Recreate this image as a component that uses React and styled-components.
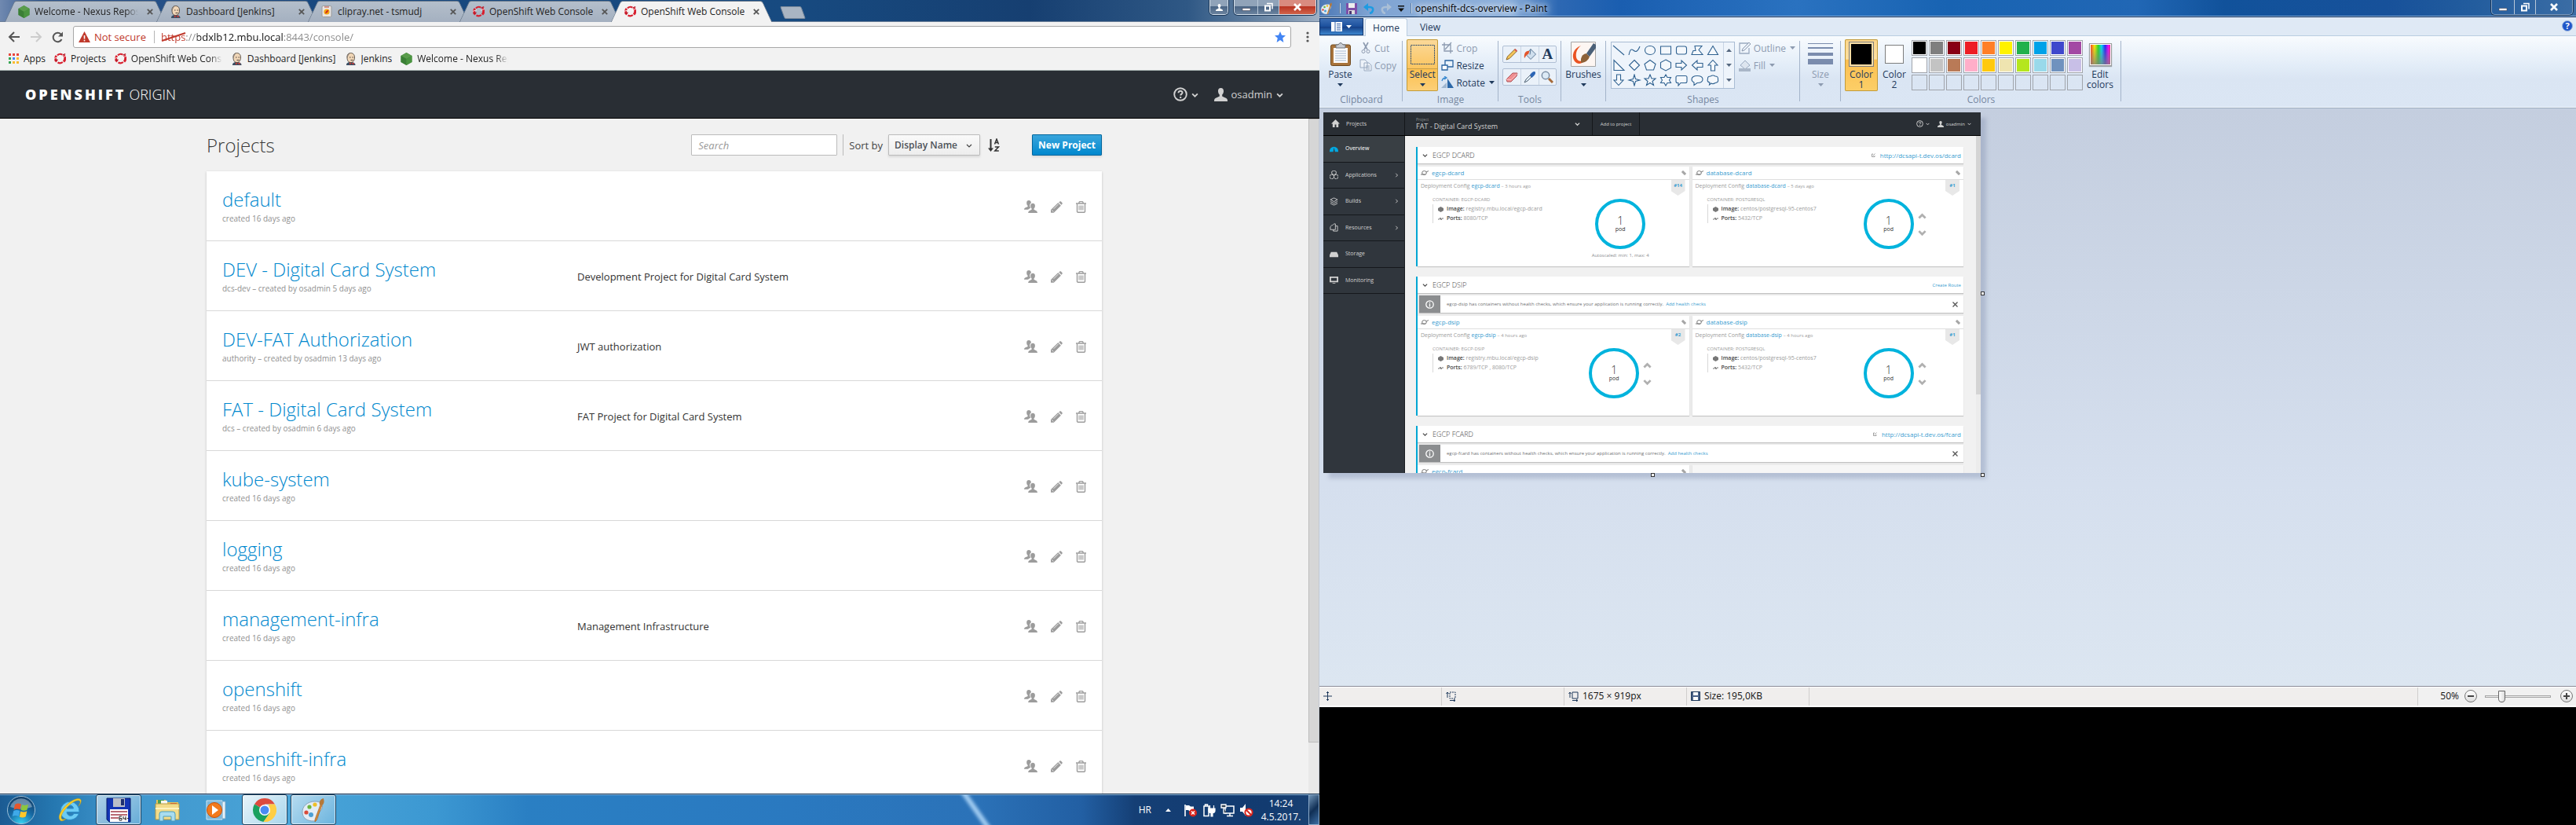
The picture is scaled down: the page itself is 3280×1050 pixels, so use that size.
import React from "react";
import styled, { createGlobalStyle, css } from "styled-components";

const ui = `"Open Sans", "Noto Sans", sans-serif`;

const GlobalStyle = createGlobalStyle`
  *, *::before, *::after { box-sizing: border-box; }
  body { margin: 0; background: #000; font-family: ${ui}; }
  button, input, select { font-family: inherit; margin: 0; padding: 0; border: 0; background: none; color: inherit; }
  button { cursor: pointer; }
  a { text-decoration: none; }
  svg { display: block; flex: none; }
  h1, h2, h3, p, ul { margin: 0; padding: 0; font-weight: inherit; list-style: none; }
`;

const Desktop = styled.div`
  display: grid;
  grid-template-columns: 21fr 20fr;
  height: 100vh;
  overflow: hidden;
`;
const LeftScreen = styled.div`
  display: flex;
  flex-direction: column;
  min-width: 0;
  min-height: 0;
  background: #f1f1f1;
`;
const RightScreen = styled.div`
  display: grid;
  grid-template-rows: 6fr 1fr;
  min-width: 0;
  min-height: 0;
  background: #000;
`;

/* ---------- small drawings ---------- */

const NexusIcon = () => (
  <svg width="15" height="16" viewBox="0 0 15 16">
    <path d="M7.500 0 14.500 4v8l-7 4-7-4V4z" fill="#3f8a3a" />
    <path d="M7.500 0 14.500 4l-7 4-7-4z" fill="#5a9c4c" />
    <path d="M7.500 8v8l-7-4V4z" fill="#3b7f36" />
    <path d="M7.500 8v8l7-4V4z" fill="#4a9440" />
  </svg>
);
const JenkinsIcon = () => (
  <svg width="15" height="16" viewBox="0 0 15 16">
    <path d="M2 16c0-3 2-4 5.500-4s6 1 6 4z" fill="#3b4f63" />
    <path d="M3 6c0-4 2-5.500 4.500-5.500S12.500 2 12.500 6c0 4-2 6.500-5 6.500S3 10 3 6z" fill="#f0d6b7" stroke="#3a322c" strokeWidth=".8" />
    <path d="M3 7C1.800 3 4.500.2 7.500.4 5 1.500 4.500 4 3 7z" fill="#8a8078" />
    <path d="M6 6h1.500M9.500 6H11M7.500 9.500h3" stroke="#3a322c" strokeWidth=".9" />
    <path d="m6 12.500 2.500 1.300L6 15.500zM11.500 12.500 8.500 13.800l3 1.700z" fill="#d33833" />
  </svg>
);
const ShiftIcon = () => (
  <svg width="15" height="15" viewBox="0 0 15 15">
    <path d="M3.200 11.500A5.600 5.600 0 0 1 3 4M12.200 3.500a5.600 5.600 0 0 1-.2 8" fill="none" stroke="#d8202f" strokeWidth="3" />
    <path d="M4 3.400a5.600 5.600 0 0 1 6.300-1M4.500 12.500a5.600 5.600 0 0 0 6.300-.5" fill="none" stroke="#d8202f" strokeWidth="2.200" />
    <path d="m0 7.400 5-1.800M10 6.200l5-1.800" stroke="#fff" strokeWidth=".8" />
    <path d="m.6 10.400 4-1.500M10.600 3.200l3.600-1.500" stroke="#b51a28" strokeWidth="1.300" />
  </svg>
);
const ClipIcon = () => (
  <svg width="15" height="15" viewBox="0 0 15 15">
    <rect x="1" y=".5" width="12" height="14" rx="1.500" fill="#e9e6e2" stroke="#9a9a9a" />
    <path d="M4 2h6" stroke="#c2463c" />
    <circle cx="7" cy="8" r="3.600" fill="#f3a712" />
    <path d="M5 10c1-3 2-4 4.500-4.500C9 8 7.500 10 5 10z" fill="#cf2b1c" />
  </svg>
);
const AppsIcon = () => (
  <svg width="13" height="13" viewBox="0 0 13 13">
    {["#e8453c", "#e8453c", "#e8453c", "#36a652", "#4688f1", "#f9bb2d", "#36a652", "#f9bb2d", "#f9bb2d"].map((c, i) => (
      <rect key={i} x={(i % 3) * 5} y={Math.floor(i / 3) * 5} width="3" height="3" fill={c} />
    ))}
  </svg>
);
const Chevron = ({ size = 8, dir = "down", w = 1.6 }) => {
  const d = { down: "M1 3l3 3 3-3", up: "M1 5.500l3-3 3 3", right: "M3 1l3 3-3 3" }[dir];
  return (
    <svg width={size} height={size} viewBox="0 0 8 8">
      <path d={d} fill="none" stroke="currentColor" strokeWidth={w} />
    </svg>
  );
};
const HelpIcon = ({ size = 18 }) => (
  <svg width={size} height={size} viewBox="0 0 18 18" fill="none" stroke="currentColor">
    <circle cx="9" cy="9" r="7.800" strokeWidth="1.900" />
    <path d="M6.500 7.300C6.500 4 11.700 4.200 11.500 7c-.1 1.600-2.300 1.700-2.300 3.600M9.200 12v1.900" strokeWidth="2" />
  </svg>
);
const UserIcon = ({ size = 17 }) => (
  <svg width={size} height={size} viewBox="0 0 17 17" fill="currentColor">
    <path d="M8.500 0C11 0 12.300 1.800 12 4.500c-.2 2-.9 3.300-1.800 4v1.800c0 1 5.800 2 6.500 4.200.3.900.3 1.700.3 2.500H0c0-.8 0-1.600.3-2.500.7-2.200 6.500-3.200 6.500-4.200V8.500C5.900 7.800 5.200 6.500 5 4.500 4.700 1.800 6 0 8.500 0z" />
  </svg>
);
const UsersIcon = () => (
  <svg width="17" height="16" viewBox="0 0 17 16" fill="currentColor">
    <path d="M6 0c2 0 3 1.300 2.900 3.200C7.500 4 7 5.500 7.300 7.200c.1 1 .5 1.900 1 2.500-1.600.7-2.600 1.200-3.200 2.100H0c0-2 1-2.600 4.300-3.600.4-.2.500-.9.200-1.500C3.600 5.800 3.200 4.600 3.200 3.200 3.200 1.200 4.200 0 6 0z" />
    <path d="M11 3.700c2 0 3.100 1.300 2.900 3.500-.1 1.500-.6 2.500-1.400 3.200v1.400c.9.900 4.500 1.200 4.500 4.200H5.200c0-3 3.500-3.300 4.400-4.200v-1.400c-.8-.7-1.300-1.700-1.400-3.200-.2-2.200.9-3.500 2.800-3.500z" />
  </svg>
);
const PencilIcon = () => (
  <svg width="15" height="15" viewBox="0 0 15 15" fill="currentColor">
    <path d="m9.300 2.100 3.600 3.600-8.300 8.300-.8.800H0V11l.8-.8zM11.300.6c.5-.5 1.200-.5 1.700 0l1.400 1.400c.5.500.5 1.200 0 1.700l-1 1-3.100-3.100z" />
    <path d="m3.600 9.800 6-6M1.300 11.400l2 2" stroke="#fff" strokeWidth=".8" />
  </svg>
);
const TrashIcon = () => (
  <svg width="13" height="15" viewBox="0 0 13 15" fill="none" stroke="currentColor">
    <path d="M0 3h13M4 2.800V1.400L4.800.7h3.400l.8.700v1.400" strokeWidth="1.300" />
    <path d="M1.500 3.500v10l.8.700h8.400l.8-.700v-10" strokeWidth="1.400" />
    <path d="M4 5.500v6M5.700 5.500v6M7.400 5.500v6M9 5.500v6" strokeWidth=".9" />
  </svg>
);
const SortIcon = () => (
  <svg width="15" height="18" viewBox="0 0 15 18" fill="none" stroke="#333">
    <path d="M3.500 1v13" strokeWidth="2" />
    <path d="M0 12.500h7L3.500 17z" fill="#333" stroke="none" />
    <path d="M8.500 7.500 11 1l2.500 6.500M9.500 5.500h3M8.800 11h4.700l-4.700 5h5" strokeWidth="1.500" />
  </svg>
);
const Triangle = ({ up }) => (
  <svg width="7" height="4" viewBox="0 0 7 4" fill="currentColor">
    <path d={up ? "M0 4h7L3.500 0z" : "M0 0h7L3.500 4z"} />
  </svg>
);
const WinMin = () => (
  <svg width="12" height="12" viewBox="0 0 12 12"><path d="M1 7.500h10v3H1z" fill="#fff" stroke="#445" strokeWidth=".6" /></svg>
);
const WinMax = () => (
  <svg width="12" height="12" viewBox="0 0 12 12" fill="none">
    <path d="M4 1.500h7v7" stroke="#fff" strokeWidth="1.500" />
    <path d="M2 4.500h6v6H2z" stroke="#fff" strokeWidth="2" />
  </svg>
);
const WinClose = () => (
  <svg width="12" height="12" viewBox="0 0 12 12"><path d="m2 2 8 8M10 2l-8 8" stroke="#fff" strokeWidth="2.600" /></svg>
);

/* ---------- browser ---------- */

const TitleBar = styled.div`
  display: flex;
  height: 28px;
  padding-left: 12px;
  background: linear-gradient(90deg, #7089b0 0, #2f568d 3%, #17487f 24%, #174a80 60%, #163f71 78%, #2f5885 90%, #7690ac 97%, #9fb0c4 100%);
  border-bottom: 1px solid #6b7f98;
`;
const Tabs = styled.div`
  display: flex;
  padding-top: 1px;
  margin-bottom: -1px;
  position: relative;
  z-index: 0;
`;
const tabFill = css`
  content: "";
  position: absolute;
  z-index: -1;
  top: 0;
  bottom: 0;
  background: ${(p) => (p.$active ? "#f2f2f2" : "linear-gradient(#b4bfcb, #a4b0c0)")};
  border: 0 solid #6b7a8c;
  border-top-width: 1px;
`;
const Tab = styled.div`
  position: relative;
  z-index: ${(p) => (p.$active ? 2 : 0)};
  display: flex;
  align-items: center;
  gap: 6px;
  width: 193px;
  padding: 0 8px 0 11px;
  font-size: 12px;
  line-height: 27px;
  color: #222;
  &::before { ${tabFill} left: 0; right: 40%; transform: skewX(-25deg); border-left-width: 1px; border-radius: 3px 0 0 0; }
  &::after { ${tabFill} left: 40%; right: 0; transform: skewX(25deg); border-right-width: 1px; border-radius: 0 3px 0 0; }
`;
const Fade = styled.span`
  flex: ${(p) => (p.$grow ? 1 : "none")};
  max-width: ${(p) => p.$max || 132}px;
  overflow: hidden;
  white-space: nowrap;
  ${(p) => p.$fade && "mask-image: linear-gradient(90deg, #000 calc(100% - 16px), transparent);"}
`;
const TabClose = styled.button`
  margin-left: auto;
  width: 12px;
  height: 12px;
  color: #555;
  svg { margin: 2px; }
`;
const NewTab = styled.button`
  width: 27px;
  height: 16px;
  margin: 8px 0 0 19px;
  background: #a9b5c3;
  border: 1px solid #7b8a9c;
  border-radius: 2px;
  transform: skewX(20deg);
`;
const WindowButtons = styled.div`
  display: flex;
  gap: 7px;
  height: 19px;
  margin: 0 4px 0 auto;
  align-self: flex-start;
`;
const ButtonCluster = styled.div`
  display: flex;
  border: 1px solid #d4e0ec;
  border-top: 0;
  border-radius: 0 0 5px 5px;
  overflow: hidden;
  box-shadow: 0 0 0 1px #1b3656;
`;
const WinButton = styled.button`
  display: grid;
  place-items: center;
  width: ${(p) => p.$w}px;
  color: #fff;
  background: ${(p) => (p.$red ? "linear-gradient(#d98b7f 0 45%, #b93422 46%, #d0634a)" : p.$glass ? "transparent" : "linear-gradient(#90a3b9 0 45%, #4a6585 46%, #6a829e)")};
  & + & { border-left: 1px solid #b9c8d8; }
`;
const GlassCluster = styled(ButtonCluster)`
  border-color: #7f9fc4;
  button + button { border-color: #7f9fc4; }
`;
const Toolbar = styled.div`
  display: flex;
  align-items: center;
  gap: 12px;
  height: 35px;
  padding: 5px 10px 2px;
  background: #f2f2f2;
`;
const NavButton = styled.button`
  color: ${(p) => (p.$off ? "#ccc" : "#555")};
`;
const Omnibox = styled.div`
  flex: 1;
  display: flex;
  align-items: center;
  height: 28px;
  padding: 0 6px;
  background: #fff;
  border: 1px solid #a8a8a8;
  border-radius: 3px;
`;
const Security = styled.button`
  display: flex;
  align-items: center;
  gap: 5px;
  padding-right: 10px;
  border-right: 1px solid #b5b5b5;
  color: #c0392b;
  font-size: 13px;
  line-height: 16px;
`;
const UrlWrap = styled.label`
  position: relative;
  flex: 1;
  display: flex;
  margin-left: 8px;
  svg { position: absolute; left: 0; top: 6px; }
`;
const UrlInput = styled.input`
  width: 100%;
  height: 24px;
  font-size: 13px;
  color: #222;
  -webkit-text-fill-color: transparent;
  background: linear-gradient(90deg, #c0392b 0 32px, #888 32px 46px, #111 46px 155px, #888 155px);
  background-clip: text;
  -webkit-background-clip: text;
  outline: 0;
`;
const Bookmarks = styled.nav`
  display: flex;
  align-items: center;
  gap: 11px;
  height: 27px;
  padding: 0 11px 3px;
  background: #f2f2f2;
  border-bottom: 1px solid #a9b5b2;
  font-size: 12px;
  line-height: 17px;
`;
const Bookmark = styled.a`
  display: flex;
  align-items: center;
  gap: 6px;
  color: #222;
`;
const Masthead = styled.header`
  display: flex;
  align-items: center;
  justify-content: space-between;
  height: 61px;
  padding: 0 46px 0 32px;
  background: #292e34;
  border-bottom: 1px solid #000;
  color: #d1d1d1;
`;
const Brand = styled.a`
  display: flex;
  gap: 4px;
  font-size: 18px;
  line-height: 24px;
  font-weight: 300;
  color: #fff;
  b { font-weight: 800; letter-spacing: 3px; }
`;
const MastTools = styled.div`
  display: flex;
  gap: 20px;
`;
const MastButton = styled.button`
  display: flex;
  align-items: center;
  gap: 5px;
  font-size: 13px;
  line-height: 20px;
`;
const Viewport = styled.div`
  flex: 1;
  min-height: 0;
  display: flex;
`;
const Page = styled.main`
  flex: 1;
  min-width: 0;
  overflow: hidden;
  padding: 20px 16px 0;
`;
const Container = styled.div`
  max-width: 1140px;
  margin: 0 auto;
`;
const PageHead = styled.div`
  display: flex;
  align-items: center;
  height: 27px;
  margin-bottom: 20px;
  font-size: 13px;
  color: #444;
`;
const PageTitle = styled.h1`
  flex: 1;
  font-size: 24px;
  line-height: 26px;
  font-weight: 300;
  color: #3a3a3a;
`;
const Search = styled.input`
  width: 186px;
  height: 27px;
  padding: 0 8px;
  background: #fff;
  border: 1px solid #bbb;
  border-radius: 1px;
  font-size: 13px;
  font-style: italic;
  &::placeholder { color: #999; font-style: italic; opacity: 1; }
`;
const SortBox = styled.label`
  display: flex;
  align-items: center;
  gap: 7px;
  height: 27px;
  margin-left: 7px;
  padding-left: 7px;
  border-left: 1px solid #bbb;
`;
const SelectWrap = styled.span`
  position: relative;
  display: flex;
  align-items: center;
  svg { position: absolute; right: 10px; pointer-events: none; }
`;
const SortSelect = styled.select`
  appearance: none;
  width: 117px;
  height: 27px;
  padding: 0 7px;
  font-size: 12px;
  font-weight: 600;
  color: #4d5258;
  background: linear-gradient(#fafafa, #ededed);
  border: 1px solid #bbb;
  border-radius: 1px;
  box-shadow: 0 2px 3px rgba(3, 3, 3, 0.1);
`;
const SortDirection = styled.button`
  margin: 0 41px 0 10px;
`;
const Primary = styled.button`
  width: 89px;
  height: 27px;
  font-size: 12px;
  font-weight: 700;
  color: #fff;
  background: linear-gradient(#39a5dc, #0088ce);
  border: 1px solid #00659c;
  border-radius: 1px;
  box-shadow: 0 2px 3px rgba(3, 3, 3, 0.1);
`;
const ProjectList = styled.ul`
  background: #fff;
  box-shadow: 0 1px 3px rgba(0, 0, 0, 0.2);
`;
const ProjectRow = styled.li`
  display: grid;
  grid-template-columns: 452px 1fr auto;
  align-items: center;
  height: 89px;
  padding: 2px 20px 0;
  border-bottom: 1px solid #d8d8d8;
  font-size: 13px;
  color: #333;
`;
const ProjectName = styled.a`
  display: block;
  font-size: 24px;
  line-height: 26px;
  font-weight: 300;
  color: #0088ce;
`;
const ProjectMeta = styled.p`
  margin-top: 4px;
  font-size: 10px;
  line-height: 15px;
  color: #8f8f8f;
`;
const RowActions = styled.div`
  display: flex;
  align-items: center;
  gap: 17px;
  color: #9c9c9c;
`;
const ScrollTrack = styled.div`
  width: 14px;
  background: #e8e8e8;
  border-right: 1px solid #c3c9d3;
`;
const ScrollThumb = styled.div`
  height: 794px;
  max-height: 93%;
  background: #d6d6d6;
  border: 1px solid #bdbdbd;
  border-width: 1px 0 1px 1px;
`;

const projects = [
  ["default", "created 16 days ago", ""],
  ["DEV - Digital Card System", "dcs-dev – created by osadmin 5 days ago", "Development Project for Digital Card System"],
  ["DEV-FAT Authorization", "authority – created by osadmin 13 days ago", "JWT authorization"],
  ["FAT - Digital Card System", "dcs – created by osadmin 6 days ago", "FAT Project for Digital Card System"],
  ["kube-system", "created 16 days ago", ""],
  ["logging", "created 16 days ago", ""],
  ["management-infra", "created 16 days ago", "Management Infrastructure"],
  ["openshift", "created 16 days ago", ""],
  ["openshift-infra", "created 16 days ago", ""],
];
const tabs = [
  ["Welcome - Nexus Repository", NexusIcon, true],
  ["Dashboard [Jenkins]", JenkinsIcon],
  ["clipray.net - tsmudj", ClipIcon],
  ["OpenShift Web Console", ShiftIcon],
  ["OpenShift Web Console", ShiftIcon],
];
const bookmarks = [
  ["Apps", AppsIcon],
  ["Projects", ShiftIcon],
  ["OpenShift Web Console", ShiftIcon, true],
  ["Dashboard [Jenkins]", JenkinsIcon],
  ["Jenkins", JenkinsIcon],
  ["Welcome - Nexus Repository", NexusIcon, true],
];

const Browser = () => (
  <>
    <TitleBar>
      <Tabs>
        {tabs.map(([t, Icon, fade], i) => (
          <Tab key={i} $active={i === 4}>
            <Icon />
            <Fade $grow $fade={fade}>{t}</Fade>
            <TabClose aria-label="Close tab">
              <svg width="8" height="8" viewBox="0 0 8 8"><path d="m.8.8 6.400 6.400m0-6.400L.8 7.200" stroke="currentColor" strokeWidth="1.800" /></svg>
            </TabClose>
          </Tab>
        ))}
      </Tabs>
      <NewTab aria-label="New tab" />
      <WindowButtons>
        <ButtonCluster>
          <WinButton $w={22} aria-label="Profile"><UserIcon size={9} /></WinButton>
        </ButtonCluster>
        <ButtonCluster>
          <WinButton $w={29} aria-label="Minimize"><WinMin /></WinButton>
          <WinButton $w={27} aria-label="Restore"><WinMax /></WinButton>
          <WinButton $w={47} $red aria-label="Close"><WinClose /></WinButton>
        </ButtonCluster>
      </WindowButtons>
    </TitleBar>
    <Toolbar>
      <NavButton aria-label="Back"><svg width="16" height="14" viewBox="0 0 16 14" fill="none" stroke="currentColor" strokeWidth="2"><path d="M15 7H2M8 1 2 7l6 6" /></svg></NavButton>
      <NavButton $off aria-label="Forward"><svg width="16" height="14" viewBox="0 0 16 14" fill="none" stroke="currentColor" strokeWidth="2"><path d="M1 7h13M8 1l6 6-6 6" /></svg></NavButton>
      <NavButton aria-label="Reload"><svg width="15" height="15" viewBox="0 0 15 15"><path d="M12.500 10A5.700 5.700 0 1 1 11.500 3.500" fill="none" stroke="currentColor" strokeWidth="2" /><path d="M14 .5v6H8z" fill="currentColor" /></svg></NavButton>
      <Omnibox>
        <Security>
          <svg width="15" height="14" viewBox="0 0 15 14"><path d="M7.500 0 15 14H0z" fill="#c0392b" /><path d="M7.500 5v4.500M7.500 10.700v1.800" stroke="#fff" strokeWidth="1.600" /></svg>
          Not secure
        </Security>
        <UrlWrap>
          <UrlInput aria-label="Address" defaultValue="https://bdxlb12.mbu.local:8443/console/" />
          <svg width="32" height="12" viewBox="0 0 32 12"><path d="m1 11 30-10" stroke="#c0392b" strokeWidth="2" /></svg>
        </UrlWrap>
        <svg width="14" height="14" viewBox="0 0 14 14"><path d="m7 0 2 4.800 5 .4-3.800 3.300L11.400 14 7 11l-4.400 3 1.200-5.500L0 5.200l5-.4z" fill="#4285f4" /></svg>
      </Omnibox>
      <NavButton aria-label="Menu"><svg width="14" height="14" viewBox="0 0 14 14" fill="currentColor"><circle cx="9" cy="2" r="1.600" /><circle cx="9" cy="7" r="1.600" /><circle cx="9" cy="12" r="1.600" /></svg></NavButton>
    </Toolbar>
    <Bookmarks>
      {bookmarks.map(([t, Icon, fade], i) => (
        <Bookmark key={i} href="#"><Icon /><Fade $max={116} $fade={fade}>{t}</Fade></Bookmark>
      ))}
    </Bookmarks>
    <Masthead>
      <Brand href="#"><b>OPENSHIFT</b><span>ORIGIN</span></Brand>
      <MastTools>
        <MastButton aria-label="Help"><HelpIcon /><Chevron size={9} /></MastButton>
        <MastButton><UserIcon />osadmin<Chevron size={9} /></MastButton>
      </MastTools>
    </Masthead>
    <Viewport>
      <Page>
        <Container>
          <PageHead>
            <PageTitle>Projects</PageTitle>
            <Search placeholder="Search" aria-label="Search" />
            <SortBox>
              Sort by
              <SelectWrap>
                <SortSelect defaultValue="Display Name"><option>Display Name</option></SortSelect>
                <Chevron size={8} w={1.2} />
              </SelectWrap>
            </SortBox>
            <SortDirection aria-label="Sort direction"><SortIcon /></SortDirection>
            <Primary>New Project</Primary>
          </PageHead>
          <ProjectList>
            {projects.map(([name, meta, desc]) => (
              <ProjectRow key={name}>
                <div>
                  <ProjectName href="#">{name}</ProjectName>
                  <ProjectMeta>{meta}</ProjectMeta>
                </div>
                <p>{desc}</p>
                <RowActions>
                  <button aria-label="Members"><UsersIcon /></button>
                  <button aria-label="Edit"><PencilIcon /></button>
                  <button aria-label="Delete"><TrashIcon /></button>
                </RowActions>
              </ProjectRow>
            ))}
          </ProjectList>
        </Container>
      </Page>
      <ScrollTrack><ScrollThumb /></ScrollTrack>
    </Viewport>
  </>
);

/* ---------- taskbar ---------- */

const TaskBar = styled.footer`
  position: relative;
  display: flex;
  align-items: center;
  height: 40px;
  padding-left: 8px;
  overflow: hidden;
  border-top: 1px solid #14304f;
  box-shadow: inset 0 1px 0 #8fb8dc;
  background: linear-gradient(90deg, #1b5b93 0, #2577b0 4%, #3f95cc 9%, #4aa5d8 22%, #3c98d2 33%, #2a7fc3 40%, #2a79c0 60%, #2b72b8 74%, #225fa3 82%, #153f75 86%, #123b70 96%, #1a4273 100%);
  color: #fff;
`;
const TaskButton = styled.button`
  display: grid;
  place-items: center;
  width: 58px;
  height: 39px;
  margin-right: 4px;
  border-radius: 3px;
  ${(p) => p.$open && `border: 1px solid #1e425f; box-shadow: inset 0 0 0 1px rgba(255,255,255,.6); background: linear-gradient(135deg, rgba(255,255,255,.6), rgba(255,255,255,.2));`}
  ${(p) => p.$front && `background: linear-gradient(135deg, #e8f4fa, #a9d6ec);`}
`;
const StartButton = styled.button`
  width: 38px;
  height: 39px;
  margin-right: 14px;
`;
const Streak = styled.div`
  position: absolute;
  left: 74%;
  top: -10px;
  width: 6px;
  height: 70px;
  background: #a9d2f5;
  transform: rotate(-35deg);
  filter: blur(2px);
`;
const Tray = styled.div`
  display: flex;
  align-items: center;
  gap: 6px;
  margin-left: auto;
  height: 100%;
  font-size: 12px;
  line-height: 17px;
`;
const Lang = styled.span`
  margin-right: 4px;
`;
const TrayArrow = styled.button`
  margin: 0 9px 0 8px;
`;
const Clock = styled.div`
  width: 58px;
  text-align: center;
`;
const ShowDesktop = styled.button`
  width: 14px;
  height: 39px;
  background: linear-gradient(135deg, #6f93b6, #102f55 50%, #3c6ea4);
  border: 1px solid #8caac8;
`;

const Taskbar = () => (
  <TaskBar>
    <Streak />
    <StartButton aria-label="Start">
      <svg width="38" height="38" viewBox="0 0 38 38">
        <defs>
          <radialGradient id="orb" cx=".5" cy="1" r="1"><stop offset="0" stopColor="#37d6f5" /><stop offset=".5" stopColor="#176aa5" /><stop offset="1" stopColor="#123b63" /></radialGradient>
        </defs>
        <circle cx="19" cy="19" r="17.500" fill="url(#orb)" stroke="#9dbfd8" />
        <path d="M5 15a14.500 14.500 0 0 1 28 0q-14 5-28 0z" fill="#fff" opacity=".35" />
        <path d="M11 12q4-2.500 8-.5l-1.500 7q-4-2-8 .2z" fill="#e8562a" />
        <path d="M20 12q4 2 8-.2l-1.500 7q-4 2-8 0z" fill="#8cc63e" />
        <path d="M9.300 20q4-2 8 0l-1.500 7q-4-2-8 0z" fill="#3fa9e8" />
        <path d="M18.300 20.500q4 2 8-.3l-1.500 7q-4 2.300-8 .2z" fill="#ffc629" />
      </svg>
    </StartButton>
    <TaskButton aria-label="Internet Explorer">
      <svg width="32" height="32" viewBox="0 0 32 32">
        <path d="M4 17a12 12.500 0 1 1 24 1.500H12c.5 5.500 7 6.500 9 2h6.300C23.500 32 4 31 4 17zm8-3h8.500c-.5-5.500-8-5.500-8.500 0z" fill="#6ccbf4" stroke="#2b8fcc" />
        <path d="M3 28C-2 20 20-2 29 2c3 2 0 7-2 9 2-3 3-6 1-7C22 1 4 18 5 26c.6 3 4 2 6 1-3 3-7 4-8 1z" fill="#f7ce2b" stroke="#c79a10" strokeWidth=".5" />
      </svg>
    </TaskButton>
    <TaskButton $open aria-label="Total Commander">
      <svg width="32" height="32" viewBox="0 0 32 32">
        <path d="M1 1h30v30H4l-3-3z" fill="#1234b4" stroke="#071a66" />
        <path d="M9 1h15v11H9z" fill="#b9bec8" /><path d="M19 2h4v8h-4z" fill="#1d2f70" />
        <path d="M5 15h23v16H5z" fill="#fff" />
        <path d="M6 18h21M6 22h21M6 26h10" stroke="#a23b45" strokeWidth="1.300" />
        <path d="M20 24h-3v5h3v-2.500h-3M22 24v3h4M25 24v5M27 26.500h2" stroke="#222" fill="none" />
      </svg>
    </TaskButton>
    <TaskButton aria-label="Explorer">
      <svg width="32" height="32" viewBox="0 0 32 32">
        <path d="M2 3h12l2 3h14v4H2z" fill="#e6c45a" /><path d="M4 3h8v5H4z" fill="#4b9e52" /><path d="M8 4h8v5H8z" fill="#f7f7f0" /><path d="M20 7h8v4h-8z" fill="#d33" />
        <path d="M1 8h30v20H1z" fill="#f2dc8b" stroke="#b89a42" /><path d="M1 14h30" stroke="#fff3bf" strokeWidth="2" />
        <path d="M6 30v-9q0-3 3-3h14q3 0 3 3v9h-5v-6H11v6z" fill="#a9dcef" stroke="#4b9dbd" />
      </svg>
    </TaskButton>
    <TaskButton aria-label="Media Player">
      <svg width="32" height="28" viewBox="0 0 32 28">
        <path d="M4 2h20v24H4z" fill="#7db9dc" stroke="#cfe6f4" /><path d="M24 3h4v22h-4z" fill="#e8f2f8" stroke="#6ea4c6" />
        <circle cx="14" cy="14" r="9.500" fill="#f27a1d" stroke="#c9530b" /><path d="m11 8 8 6-8 6z" fill="#fff" />
      </svg>
    </TaskButton>
    <TaskButton $open $front aria-label="Chrome">
      <svg width="30" height="30" viewBox="0 0 30 30">
        <path d="M15 15 2 7.500A15 15 0 0 1 28 7.500H15z" fill="#dd4b3e" />
        <path d="M15 15 2 7.500A15 15 0 0 0 13.500 29.900L21.500 18.800z" fill="#1aa15f" />
        <path d="M28 7.500A15 15 0 0 1 13.500 29.900L21.500 18.800 20 7.500z" fill="#ffce44" />
        <circle cx="15" cy="15" r="7" fill="#fff" /><circle cx="15" cy="15" r="5.500" fill="#4a8af4" />
      </svg>
    </TaskButton>
    <TaskButton $open aria-label="Paint"><PaletteIcon size={32} /></TaskButton>
    <Tray>
      <Lang>HR</Lang>
      <TrayArrow aria-label="Show hidden icons"><Triangle up /></TrayArrow>
      <svg width="18" height="18" viewBox="0 0 18 18"><path d="M3 2v15" stroke="#fff" strokeWidth="1.600" /><path d="M4 3h4l2 1.500h4v6H9L7 9H4z" fill="#fff" /><circle cx="13" cy="12.500" r="5" fill="#d8251d" /><path d="m11 10.500 4 4m0-4-4 4" stroke="#fff" strokeWidth="1.500" /></svg>
      <svg width="18" height="18" viewBox="0 0 18 18"><path d="M3 4h6v12.500H3zM4.500 2h3v2h-3z" fill="none" stroke="#fff" strokeWidth="1.500" /><path d="M9 7h8v3q0 2.500-3 2.500V17h-2v-4.500q-3 0-3-2.500zM10.500 3v4M15.500 3v4" fill="#fff" stroke="#fff" strokeWidth="1.200" /></svg>
      <svg width="18" height="18" viewBox="0 0 18 18"><path d="M6 4h11v9H6zM8 16.500h8M12 13v3" fill="none" stroke="#fff" strokeWidth="1.500" /><path d="M1 2h6v4H1zM4 6v7h4" fill="#345" stroke="#fff" strokeWidth="1.300" /></svg>
      <svg width="18" height="18" viewBox="0 0 18 18"><path d="M1 6h3l4-5v15l-4-5H1z" fill="#fff" /><circle cx="12" cy="12" r="4.600" fill="#fff" stroke="#d8251d" strokeWidth="2" /><path d="m9 9 6 6" stroke="#d8251d" strokeWidth="2" /></svg>
      <Clock><div>14:24</div><div>4.5.2017.</div></Clock>
      <ShowDesktop aria-label="Show desktop" />
    </Tray>
  </TaskBar>
);

/* ---------- paint ---------- */

const PaletteIcon = ({ size = 16 }) => (
  <svg width={size} height={size} viewBox="0 0 32 32">
    <path d="M2 20C1 11 9 5 18 5c8 0 11 4 9 9s-5 4-5 8 0 8-6 8C9 30 3 27 2 20z" fill="#e3edf5" stroke="#8aa3ba" />
    <circle cx="7" cy="19" r="2.600" fill="#d94b3a" /><circle cx="11" cy="12" r="2.600" fill="#6ab43e" /><circle cx="18" cy="9" r="2.600" fill="#f0bf27" /><circle cx="13" cy="22" r="3" fill="#4c9fd4" />
    <path d="m18 31 2-2 7-19-2-1-7 19z" fill="#d68b3a" stroke="#9c5b1c" strokeWidth=".6" />
    <path d="M24 9c-1-4 1-7 5-8 1 4 1 7-2 9z" fill="#b5793a" />
  </svg>
);

const PaintWindow = styled.div`
  display: flex;
  flex-direction: column;
  min-width: 0;
  min-height: 0;
  font-size: 12px;
  line-height: 16px;
  color: #1e395b;
`;
const PaintTitle = styled.div`
  display: flex;
  align-items: center;
  height: 22px;
  padding-left: 1px;
  border-bottom: 1px solid #0d2c5a;
  box-shadow: inset 0 -1px 0 #8db4dd;
  background: linear-gradient(90deg, #4c78b5 0, #7fa3d2 4%, #8fb2dc 15%, #2d68b3 19%, #1a5eb0 24%, #2a72c0 38%, #1863b2 50%, #2167b5 65%, #11529b 72%, #17519a 85%, #235d9e 92%, #3b6da5 100%);
`;
const QuickTools = styled.div`
  display: flex;
  align-items: center;
  gap: 8px;
  margin-right: 5px;
  color: #111;
`;
const QuickSep = styled.i`
  width: 1px;
  height: 13px;
  background: #5c7ca4;
  box-shadow: 1px 0 0 #c3d5ea;
`;
const TitleText = styled.span`
  color: #000;
  text-shadow: 0 0 8px #fff, 0 0 8px #fff;
`;
const RibbonTabs = styled.div`
  display: flex;
  align-items: flex-end;
  height: 24px;
  padding: 1px 4px 0 0;
  background: #dfe9f5;
  border-bottom: 1px solid #bacde0;
`;
const FileButton = styled.button`
  display: flex;
  align-items: center;
  justify-content: center;
  gap: 5px;
  width: 56px;
  height: 22px;
  margin-right: 2px;
  color: #fff;
  background: linear-gradient(#3c6eb4, #1b4f9c 50%, #153f86 51%, #3c86cf);
  border: 1px solid #14386f;
`;
const RibbonTab = styled.button`
  width: ${(p) => (p.$active ? 54 : 58)}px;
  height: 23px;
  margin-bottom: -1px;
  font-size: 12px;
  color: #1e395b;
  ${(p) => p.$active && "background: #f8fbfe; border: 1px solid #bacde0; border-bottom: 0; border-radius: 3px 3px 0 0;"}
`;
const HelpButton = styled.button`
  display: grid;
  place-items: center;
  width: 14px;
  height: 14px;
  margin: 0 0 5px auto;
  border-radius: 50%;
  font-size: 11px;
  line-height: 12px;
  font-weight: 700;
  color: #fff;
  background: #1f55c8;
  border: 1px solid #9bb6e0;
`;
const Ribbon = styled.div`
  display: flex;
  height: 92px;
  padding: 4px 1px 0;
  background: linear-gradient(#f8fbfe, #e3edf8 40%, #dae5f3 60%, #dbe6f4);
  border-bottom: 1px solid #a0aec0;
  box-shadow: inset 0 -1px 0 #f0f6fc;
`;
const Group = styled.section`
  display: flex;
  flex-direction: column;
  width: ${(p) => p.$w}px;
  background: linear-gradient(#a4b4ca, #a4b4ca) 100% 2px / 1px 77px no-repeat;
`;
const GroupBody = styled.div`
  display: flex;
  gap: ${(p) => p.$gap || 0}px;
  height: 68px;
  padding: 0 ${(p) => p.$pad || 5}px;
`;
const GroupLabel = styled.h2`
  font-size: 12px;
  line-height: 20px;
  text-align: center;
  color: #76879f;
`;
const BigButton = styled.button`
  display: flex;
  flex-direction: column;
  align-items: center;
  width: ${(p) => p.$w || 42}px;
  height: 66px;
  font-size: 12px;
  line-height: 13px;
  color: ${(p) => (p.$off ? "#8d9bb0" : "#1e395b")};
  border-radius: 2px;
  ${(p) => p.$on && "background: linear-gradient(#fbd58b, #fde0a0 38%, #fbbf50 40%, #fccf68); box-shadow: inset 0 0 0 1px #c29b3a;"}
  ${(p) => p.$split && "background: linear-gradient(#fbd99a, #fbc560 37px, #c9a04a 37px, #c9a04a 38px, #fcc050 38px, #fcd079);"}
`;
const BigIcon = styled.span`
  display: grid;
  place-items: center;
  height: 38px;
`;
const Caret = styled.span`
  display: grid;
  place-items: center;
  height: 13px;
`;
const SmallColumn = styled.div`
  display: flex;
  flex-direction: column;
`;
const SmallButton = styled.button`
  display: flex;
  align-items: center;
  gap: 3px;
  height: 22px;
  font-size: 12px;
  color: ${(p) => (p.$off ? "#8d9bb0" : "#1e395b")};
`;
const CaretGap = styled.span`
  margin-left: 2px;
`;
const ToolGrid = styled.div`
  display: flex;
  flex-direction: column;
  gap: 7px;
  padding-top: 8px;
`;
const ToolRow = styled.div`
  display: grid;
  grid-template-columns: repeat(3, 1fr);
  width: 69px;
  height: 22px;
  border: 1px solid #b0bfd4;
  border-radius: 2px;
  background: #eaf1f9;
`;
const Tool = styled.button`
  display: grid;
  place-items: center;
  & + & { border-left: 1px solid #c8d4e4; }
`;
const ShapeBox = styled.div`
  display: flex;
  width: 158px;
  height: 60px;
  margin-top: 3px;
  border: 1px solid #a9bcd3;
  background: #eef4fb;
`;
const ShapeGrid = styled.div`
  flex: 1;
  display: grid;
  grid-template-columns: repeat(7, 20px);
  align-content: space-around;
`;
const ShapeScroll = styled.div`
  display: flex;
  flex-direction: column;
  justify-content: space-around;
  align-items: center;
  width: 14px;
  border-left: 1px solid #c8d4e4;
  color: #55677f;
`;
const Swatch = styled.span`
  display: block;
  width: ${(p) => p.$s}px;
  height: ${(p) => p.$s}px;
  border: 1px solid #7d7d7d;
  box-shadow: inset 0 0 0 2px ${(p) => p.$rim};
  background: ${(p) => p.$c};
`;
const PaletteGrid = styled.div`
  display: grid;
  grid-template-columns: repeat(10, 20px);
  grid-auto-rows: 20px;
  gap: 2px;
  padding: 1px 1px 0;
`;
const PaletteCell = styled.button`
  border: 1px solid #a0a4ab;
  background: ${(p) => p.$c || "transparent"};
  ${(p) => p.$c && "box-shadow: inset 0 0 0 1px #fff;"}
`;
const Rainbow = styled.span`
  width: 29px;
  height: 29px;
  border: 1px solid #9a9a9a;
  box-shadow: inset 0 0 0 1px #fff, 0 1px 1px rgba(0, 0, 0, 0.3);
  background: linear-gradient(transparent, rgba(128, 128, 128, 0.8)), linear-gradient(90deg, #f22, #fe0 22%, #2d2 40%, #0df 55%, #22f 72%, #f0f 88%, #f25);
`;
const Workspace = styled.div`
  flex: 1;
  min-height: 0;
  padding: 5px;
  background: linear-gradient(#c4cedf, #d5dfee 65%, #dce6f1);
`;
const CanvasFrame = styled.div`
  position: relative;
  width: 837px;
  height: 459px;
  box-shadow: 7px 7px 5px rgba(120, 135, 165, 0.35);
`;
const Handle = styled.i`
  position: absolute;
  width: 5px;
  height: 5px;
  background: #fff;
  border: 1px solid #333;
  ${(p) => p.$at}
`;
const StatusBar = styled.div`
  display: flex;
  align-items: center;
  height: 27px;
  border-top: 1px solid #8b8b97;
  border-bottom: 2px solid #fff;
  box-shadow: inset 0 1px 0 #fff;
  background: #f0eeed;
  color: #111;
`;
const StatusCell = styled.div`
  display: flex;
  align-items: center;
  gap: 5px;
  width: 156px;
  height: 23px;
  padding-left: 5px;
  border-right: 1px solid #d0cecd;
`;
const ZoomCell = styled.label`
  display: flex;
  align-items: center;
  gap: 7px;
  height: 23px;
  margin-left: auto;
  padding: 0 4px 0 28px;
  border-left: 1px solid #d0cecd;
  background: #f1f1f1;
`;
const RoundButton = styled.button`
  display: grid;
  place-items: center;
  width: 16px;
  height: 16px;
  border: 1px solid #777;
  border-radius: 50%;
  background: linear-gradient(#fff, #ddd);
`;
const ZoomRange = styled.input`
  appearance: none;
  width: 84px;
  height: 16px;
  margin: 0 5px 0 3px;
  &::-webkit-slider-runnable-track { height: 3px; background: #eee; border: 1px solid #a5a5a5; }
  &::-webkit-slider-thumb {
    appearance: none;
    width: 9px;
    height: 15px;
    margin-top: -7px;
    background: linear-gradient(90deg, #fff, #ddd);
    border: 1px solid #666;
    border-radius: 1px 1px 5px 5px;
  }
`;

const shapePaths = [
  "M1 2l14 12", "M1 14C5-4 8 20 15 3", "M8 2.500c4 0 6.500 2.500 6.500 5.500S12 13.500 8 13.500 1.500 11 1.500 8 4 2.500 8 2.500z",
  "M1.500 3h13v10h-13z", "M4 3h8q2.500 0 2.500 2.500v5q0 2.500-2.500 2.500H4q-2.500 0-2.500-2.500v-5Q1.500 3 4 3z", "M5 2.500h9l-4 5 5 6H1l2-5h3z", "M8 2.500 14.500 13.500h-13z",
  "M2 1.500v13h13z", "M8 1.500 14.500 8 8 14.500 1.500 8z", "M8 1.500l7 5-2.500 7.500h-9L1 6.500z", "M8 1l6.500 3.500v7L8 15l-6.500-3.500v-7z",
  "M1 5.500h7V2l6.500 6L8 14v-3.500H1z", "M15 5.500H8V2L1.500 8 8 14v-3.500h7z", "M5.500 15V8H2l6-6.500L14 8h-3.500v7z",
  "M5.500 1v7H2l6 6.500L14 8h-3.500V1z", "M8 1l1.500 5.500L15 8 9.500 9.500 8 15 6.500 9.500 1 8l5.500-1.500z", "M8 1l2 5h5l-4 3.500 1.500 5L8 11.500 3.500 14.500l1.500-5L1 6h5z",
  "M8 1l2 3.500h4.500L12.500 8l2 3.500H10L8 15l-2-3.500H1.500l2-3.500-2-3.500H6z", "M3 2.500h10q2 0 2 2v5q0 2-2 2H7L4 15v-3.500H3q-2 0-2-2v-5q0-2 2-2z",
  "M8 2.500c4.500 0 7 2 7 4.500s-2.500 4.500-7 4.500L4 14.500v-3.600C2 10 1 8.700 1 7c0-2.500 2.500-4.500 7-4.500z",
  "M5 3q3-2 6 0 4 0 3.500 4 1 4-3.500 4.500-3 2-5 .500L3.500 14l.5-3Q0 10 1.500 6.500 1 3 5 3z",
];
const palette = [
  "#000", "#7f7f7f", "#880015", "#ed1c24", "#ff7f27", "#fff200", "#22b14c", "#00a2e8", "#3f48cc", "#a349a4",
  "#fff", "#c3c3c3", "#b97a57", "#ffaec9", "#ffc90e", "#efe4b0", "#b5e61d", "#99d9ea", "#7092be", "#c8bfe7",
  ...Array(10).fill(""),
];
const Svg16 = ({ children }) => <svg width="16" height="16" viewBox="0 0 16 16" fill="none">{children}</svg>;
const PencilTool = () => <Svg16><path d="m1 15 1.500-4L12 1.500 14.500 4 5 13.500z" fill="#f5c65a" stroke="#8b6320" /><path d="m11 2.500 2.500 2.500L15 3.500 12.500 1z" fill="#d65a5a" /></Svg16>;
const BucketTool = () => <Svg16><path d="m9 1.500 6.500 6.500-6.500 6.500L3 8.500z" fill="#cfdfee" stroke="#5c7896" /><path d="m9 1.500-1 7" stroke="#5c7896" /><path d="M7.500 4C3 3 0 7 1 13c1.500-1 1.500-4 5-5z" fill="#e3552b" /></Svg16>;
const EraserTool = () => <Svg16><path d="m1 11 8-8h6l-1 4-7 7H2z" fill="#ef8e90" stroke="#b0565b" /><path d="m1 11 6 .500 8-8" stroke="#f9c6c8" /></Svg16>;
const PickerTool = () => <Svg16><path d="m1 15 2-4 5-5 2 2-5 5z" fill="#e0edf8" stroke="#567" /><path d="m8 5 3-3q3-2 4 0 .500 2-1.500 4l-3 3z" fill="#2c65b5" /></Svg16>;
const LensTool = () => <Svg16><circle cx="6" cy="6" r="4.700" fill="#dceaf6" stroke="#7b8ea5" strokeWidth="1.500" /><path d="m10 10 5 5" stroke="#a56a3a" strokeWidth="3" /></Svg16>;
const TextTool = styled.b`
  font: bold 19px/20px "Liberation Serif", serif;
  color: #1e395b;
`;

const Paint = () => (
  <PaintWindow>
    <PaintTitle>
      <QuickTools>
        <PaletteIcon size={16} />
        <QuickSep />
        <svg width="14" height="14" viewBox="0 0 14 14"><path d="M0 0h14v14H0z" fill="#7d4fa8" /><path d="M3 0h8v6H3z" fill="#eee" /><path d="M3 9h8v5H3z" fill="#ddd" /><path d="M4 10h3v4H4z" fill="#4b3470" /></svg>
        <svg width="14" height="14" viewBox="0 0 14 14"><path d="M4 5h4q5 0 4 4.500-1 3-4 3.500" fill="none" stroke="#1d9be2" strokeWidth="2.600" /><path d="M0 5 6 0v10z" fill="#1d9be2" /></svg>
        <svg width="14" height="14" viewBox="0 0 14 14"><path d="M10 5H6q-5 0-4 4.500 1 3 4 3.500" fill="none" stroke="#aabfd6" strokeWidth="2.600" /><path d="m14 5-6-5v10z" fill="#aabfd6" /></svg>
        <svg width="8" height="8" viewBox="0 0 8 8"><path d="M0 0h8v1.500H0zM0 3.500h8L4 8z" fill="#111" /></svg>
        <QuickSep />
      </QuickTools>
      <TitleText>openshift-dcs-overview - Paint</TitleText>
      <WindowButtons>
        <GlassCluster>
          <WinButton $w={28} $glass aria-label="Minimize"><WinMin /></WinButton>
          <WinButton $w={27} $glass aria-label="Restore"><WinMax /></WinButton>
          <WinButton $w={47} $glass aria-label="Close"><WinClose /></WinButton>
        </GlassCluster>
      </WindowButtons>
    </PaintTitle>
    <RibbonTabs>
      <FileButton aria-label="File">
        <svg width="14" height="12" viewBox="0 0 14 12"><path d="M0 0h14v12H0z" fill="#fff" /><path d="M5 0v12M7 2.500h5M7 5h5M7 7.500h5M7 10h5" stroke="#2b5ca8" /></svg>
        <Triangle />
      </FileButton>
      <RibbonTab $active>Home</RibbonTab>
      <RibbonTab>View</RibbonTab>
      <HelpButton>?</HelpButton>
    </RibbonTabs>
    <Ribbon>
      <Group $w={105}>
        <GroupBody $gap={4}>
          <BigButton $w={41}>
            <BigIcon><svg width="26" height="30" viewBox="0 0 26 30"><rect x=".5" y="3" width="25" height="26.500" rx="2" fill="#a8743c" stroke="#6f4a1f" /><path d="M4 7h18v19H4z" fill="#fff" /><path d="M6 11h14M6 14h14M6 17h14M6 20h14M6 23h14" stroke="#9fb4cc" /><path d="M7 3h3q3-5 6 0h3v4H7z" fill="#c8ccd2" stroke="#6b7078" /></svg></BigIcon>
            Paste<Caret><Triangle /></Caret>
          </BigButton>
          <SmallColumn>
            <SmallButton $off><Svg16><path d="M5 1l5 9M11 1l-5 9" stroke="#8d9bb0" strokeWidth="1.600" /><circle cx="5" cy="12.500" r="2" stroke="#8d9bb0" /><circle cx="11" cy="12.500" r="2" stroke="#8d9bb0" /></Svg16>Cut</SmallButton>
            <SmallButton $off><Svg16><path d="M1 1h6l3 3v7H1zM6 5h6l3 3v7H6z" fill="#eef3f9" stroke="#9aaac0" /><path d="M8 9h5M8 11h5M8 13h5" stroke="#9aaac0" /></Svg16>Copy</SmallButton>
          </SmallColumn>
        </GroupBody>
        <GroupLabel>Clipboard</GroupLabel>
      </Group>
      <Group $w={122}>
        <GroupBody $gap={4}>
          <BigButton $on $split>
            <BigIcon><svg width="31" height="25" viewBox="0 0 31 25"><path d="M.5.5h30v24H.5z" fill="none" stroke="#24466e" strokeDasharray="2 1" /></svg></BigIcon>
            Select<Caret><Triangle /></Caret>
          </BigButton>
          <SmallColumn>
            <SmallButton $off><Svg16><path d="M4 1v11h11M1 4h11v11M13 1 5 10" stroke="#8d9bb0" strokeWidth="1.300" /></Svg16>Crop</SmallButton>
            <SmallButton><Svg16><path d="M5 2h10v8H5z" fill="#eaf3fb" stroke="#2a64a0" strokeWidth="1.300" /><path d="M1 8h7v6H1z" fill="#fff" stroke="#2a64a0" strokeWidth="1.300" /></Svg16>Resize</SmallButton>
            <SmallButton><Svg16><path d="M0 15h7V8z" fill="#9fb6d0" /><path d="M8 15h8L8 3z" fill="#2c68a8" /><path d="M1 6q1-4 5-4M4 0l3 2-3 2" stroke="#3a8ad0" strokeWidth="1.300" /></Svg16>Rotate<CaretGap><Triangle /></CaretGap></SmallButton>
          </SmallColumn>
        </GroupBody>
        <GroupLabel>Image</GroupLabel>
      </Group>
      <Group $w={80}>
        <GroupBody>
          <ToolGrid>
            <ToolRow>
              <Tool aria-label="Pencil"><PencilTool /></Tool><Tool aria-label="Fill"><BucketTool /></Tool><Tool><TextTool>A</TextTool></Tool>
            </ToolRow>
            <ToolRow>
              <Tool aria-label="Eraser"><EraserTool /></Tool><Tool aria-label="Color picker"><PickerTool /></Tool><Tool aria-label="Magnifier"><LensTool /></Tool>
            </ToolRow>
          </ToolGrid>
        </GroupBody>
        <GroupLabel>Tools</GroupLabel>
      </Group>
      <Group $w={57}>
        <GroupBody>
          <BigButton $w={46}>
            <BigIcon><svg width="32" height="32" viewBox="0 0 32 32"><path d="M.5.5h31v31H.5z" fill="#fdf6f2" stroke="#a5a5a5" /><path d="M13 5C4 8 0 18 5 25c4 5 11 3 14-2-6 3-11 2-12-3C6 14 8 9 13 5z" fill="#ea5322" /><path d="M13 22q1-6 7-7l4 4q-2 7-11 8z" fill="#8d6238" /><path d="m20 15 9-13 3 2v4l-8 11z" fill="#4a6078" /></svg></BigIcon>
            Brushes<Caret><Triangle /></Caret>
          </BigButton>
        </GroupBody>
      </Group>
      <Group $w={247}>
        <GroupBody $gap={5} $pad={6}>
          <ShapeBox>
            <ShapeGrid>
              {shapePaths.map((d, i) => (
                <button key={i} aria-label={`Shape ${i + 1}`}>
                  <svg width="18" height="16" viewBox="0 0 16 16"><path d={d} fill={i < 2 ? "none" : "#f4f8fc"} stroke="#2f6190" strokeWidth="1.100" /></svg>
                </button>
              ))}
            </ShapeGrid>
            <ShapeScroll><Triangle up /><Triangle /><Triangle /></ShapeScroll>
          </ShapeBox>
          <SmallColumn>
            <SmallButton $off><Svg16><path d="M12 2H1v13h12V8" stroke="#9aaac0" strokeWidth="1.300" /><path d="m4 12 1-3 8-8 2 2-8 8z" fill="#e8eef6" stroke="#8d9bb0" /></Svg16>Outline<CaretGap><Triangle /></CaretGap></SmallButton>
            <SmallButton $off><Svg16><path d="m8 2 6 6-6 5-6-5z" fill="#dde5ef" stroke="#9aaac0" /><path d="M0 12h15v4H0z" fill="#a9b6c8" /></Svg16>Fill<CaretGap><Triangle /></CaretGap></SmallButton>
          </SmallColumn>
        </GroupBody>
        <GroupLabel>Shapes</GroupLabel>
      </Group>
      <Group $w={52}>
        <GroupBody>
          <BigButton $off>
            <BigIcon><svg width="32" height="29" viewBox="0 0 32 29" fill="#7a8cad"><path d="M0 0h32v1H0zM0 5h32v2H0zM0 12h32v4H0zM0 20h32v7H0z" /></svg></BigIcon>
            Size<Caret><Triangle /></Caret>
          </BigButton>
        </GroupBody>
      </Group>
      <Group $w={357}>
        <GroupBody>
          <BigButton $on><BigIcon><Swatch $s={32} $c="#000" $rim="#f7dda4" /></BigIcon><span>Color</span><span>1</span></BigButton>
          <BigButton><BigIcon><Swatch $s={24} $c="#fff" $rim="#fff" /></BigIcon><span>Color</span><span>2</span></BigButton>
          <PaletteGrid>
            {palette.map((c, i) => <PaletteCell key={i} $c={c} aria-label={`Palette ${i + 1}`} />)}
          </PaletteGrid>
          <BigButton><BigIcon><Rainbow /></BigIcon><span>Edit</span><span>colors</span></BigButton>
        </GroupBody>
        <GroupLabel>Colors</GroupLabel>
      </Group>
    </Ribbon>
    <Workspace>
      <CanvasFrame>
        <Overview />
        <Handle $at="left: 100%; top: calc(50% - 2px);" />
        <Handle $at="left: calc(50% - 2px); top: 100%;" />
        <Handle $at="left: 100%; top: 100%;" />
      </CanvasFrame>
    </Workspace>
    <StatusBar>
      <StatusCell><svg width="11" height="12" viewBox="0 0 11 12"><path d="M5.500 0v12M0 6h11M4 2l1.500-1.500L7 2M4 10l1.500 1.500L7 10" fill="none" stroke="#1e395b" /></svg></StatusCell>
      <StatusCell><svg width="13" height="13" viewBox="0 0 13 13" fill="none" stroke="#1e395b"><path d="M5 1h7v8H5z" strokeDasharray="2 1" /><path d="M2 8V1M.5 3 2 1l1.500 2M5 11.500h7M10 10l2 1.500L10 13" /></svg></StatusCell>
      <StatusCell><svg width="13" height="13" viewBox="0 0 13 13" fill="none" stroke="#1e395b"><path d="M5 1h7v8H5z" /><path d="M2 8V1M.5 3 2 1l1.500 2M5 11.500h7M10 10l2 1.500L10 13" /></svg>1675 × 919px</StatusCell>
      <StatusCell><svg width="12" height="12" viewBox="0 0 12 12"><path d="M.5.5h11v11H.5z" fill="#4a6288" stroke="#1e395b" /><path d="M3 1h6v4H3zM3 7h6v4H3z" fill="#fff" /></svg>Size: 195,0KB</StatusCell>
      <ZoomCell>
        50%
        <RoundButton aria-label="Zoom out"><svg width="8" height="8" viewBox="0 0 8 8"><path d="M0 4h8" stroke="#444" strokeWidth="2" /></svg></RoundButton>
        <ZoomRange type="range" min="0" max="100" defaultValue="22" aria-label="Zoom" />
        <RoundButton aria-label="Zoom in"><svg width="8" height="8" viewBox="0 0 8 8"><path d="M0 4h8M4 0v8" stroke="#444" strokeWidth="2" /></svg></RoundButton>
      </ZoomCell>
    </StatusBar>
  </PaintWindow>
);

/* ---------- picture open in paint ---------- */

const Shot = styled.div`
  display: flex;
  flex-direction: column;
  width: 100%;
  height: 100%;
  overflow: hidden;
  background: #f1f1f1;
  font-size: 7px;
  line-height: 10px;
  color: #8b8d8f;
`;
const ShotHead = styled.div`
  display: flex;
  height: 30px;
  background: #292e34;
  border-bottom: 1px solid #000;
  color: #d1d1d1;
`;
const ShotHome = styled.div`
  display: flex;
  align-items: center;
  gap: 8px;
  width: 104px;
  padding-left: 10px;
  border-right: 1px solid #14171a;
`;
const ShotPicker = styled.div`
  display: flex;
  align-items: center;
  justify-content: space-between;
  width: 239px;
  padding: 0 15px 0 14px;
  border-right: 1px solid #14171a;
  small { display: block; font-size: 5px; line-height: 5px; color: #8b8d8f; }
  strong { display: block; font-size: 9px; line-height: 11px; font-weight: 400; }
`;
const ShotAdd = styled.button`
  width: 60px;
  font-size: 6px;
  border-right: 1px solid #14171a;
`;
const ShotTools = styled.div`
  display: flex;
  align-items: center;
  gap: 10px;
  margin-left: auto;
  padding-right: 12px;
  font-size: 6px;
  span { display: flex; align-items: center; gap: 3px; }
`;
const ShotBody = styled.div`
  flex: 1;
  min-height: 0;
  display: flex;
`;
const SideNav = styled.div`
  width: 104px;
  background: #30363d;
  border-right: 1px solid #1b1f23;
`;
const SideList = styled.nav`
  display: flex;
  flex-direction: column;
  height: 201px;
`;
const SideItem = styled.a`
  flex: 1;
  display: flex;
  align-items: center;
  gap: 9px;
  padding: 0 7px 0 8px;
  border-bottom: 1px solid #15181c;
  color: ${(p) => (p.$on ? "#fff" : "#d1d1d1")};
  background: ${(p) => (p.$on ? "#393f44" : "none")};
  span { flex: 1; }
`;
const Content = styled.div`
  flex: 1;
  min-width: 0;
  overflow: hidden;
  padding: 14px 16px 0 14px;
`;
const Panel = styled.section`
  margin-bottom: 13px;
  border-left: 2px solid #00a8d5;
  background: #ececec;
`;
const shade = css`
  background: #fff;
  box-shadow: 0 1px 1px rgba(3, 3, 3, 0.18);
`;
const PanelHead = styled.div`
  ${shade}
  display: flex;
  align-items: center;
  gap: 6px;
  height: 21px;
  padding: 0 3px 0 6px;
  color: #444;
  h3 { flex: 1; font-size: 9px; font-weight: 300; }
`;
const ShotLink = styled.a`
  font-size: ${(p) => (p.$s ? `${p.$s}px` : "inherit")};
  color: #3a9dd0;
`;
const Alert = styled.div`
  ${shade}
  display: flex;
  align-items: center;
  gap: 8px;
  height: 22px;
  margin: 3px 0 0 2px;
  padding-right: 7px;
  font-size: 6px;
  color: #6f7173;
  p { flex: 1; }
`;
const AlertIcon = styled.span`
  display: grid;
  place-items: center;
  width: 27px;
  height: 22px;
  background: #8b8d8f;
  color: #fff;
`;
const Tiles = styled.div`
  display: grid;
  grid-template-columns: 1fr 1fr;
  gap: 4px;
  padding-top: 4px;
`;
const Tile = styled.article`
  ${shade}
  position: relative;
  height: 127px;
  ${(p) => p.$blank && "background: #f6f6f6;"}
`;
const TileHead = styled.div`
  display: flex;
  align-items: center;
  gap: 4px;
  height: 17px;
  padding: 0 4px;
  border-bottom: 1px solid #dedede;
  a { flex: 1; }
`;
const Deployment = styled.p`
  padding-left: 4px;
  line-height: 16px;
  color: #9c9c9c;
  small { font-size: 6px; }
`;
const TileBody = styled.div`
  display: grid;
  grid-template-columns: 1fr 1fr;
`;
const ContainerInfo = styled.div`
  padding: 5px 0 0 19px;
  white-space: nowrap;
  h4 { margin: 0 0 2px; font-size: 6px; line-height: 8px; font-weight: 400; color: #9c9c9c; }
  ul { border-left: 1px solid #d8d8d8; padding-left: 6px; }
  li { display: flex; align-items: center; gap: 4px; line-height: 12px; color: #9c9c9c; }
  b { color: #444; font-weight: 600; }
`;
const PodArea = styled.div`
  display: flex;
  flex-direction: column;
  align-items: center;
  gap: 3px;
  padding: 8px 2px 0 0;
  font-size: 6px;
`;
const PodRow = styled.div`
  display: flex;
  align-items: center;
  gap: 5px;
`;
const Donut = styled.div`
  display: flex;
  flex-direction: column;
  align-items: center;
  justify-content: center;
  width: 64px;
  height: 64px;
  border: 4px solid #00b3dd;
  border-radius: 50%;
  color: #333;
  strong { font-size: 14px; line-height: 13px; font-weight: 300; }
  span { font-size: 7px; line-height: 9px; }
`;
const Scaler = styled.div`
  display: flex;
  flex-direction: column;
  gap: 9px;
  color: #b0b0b0;
  button { display: block; }
`;
const Badge = styled.span`
  position: absolute;
  top: 17px;
  right: 5px;
  width: 18px;
  height: 20px;
  text-align: center;
  font-size: 6px;
  line-height: 15px;
  font-weight: 700;
  color: #3a9dd0;
  background: #e8e8e8;
  clip-path: polygon(0 0, 100% 0, 100% 70%, 50% 100%, 0 70%);
`;
const ShotScroll = styled.div`
  width: 6px;
  background: linear-gradient(#d4d4d4 329px, #ececec 329px);
`;

const sideIcons = {
  home: <path d="M0 6 6 0l6 6h-2v5H7V7H5v4H2V6z" />,
  Overview: <path d="M0 9a6 6 0 0 1 12 0v1H7.500L6 4l-1 6H0z" />,
  Applications: <path d="M6 0l3 1.500v3L6 6 3 4.500v-3zM3 5.500 6 7v3L3 12 0 10V7zM9 5.500 12 7v3l-3 2-3-2V7z" fill="none" stroke="currentColor" />,
  Builds: <path d="M6 1l5 2.500L6 6 1 3.500zM1 6l5 2.500L11 6M1 8.500 6 11l5-2.500" fill="none" stroke="currentColor" />,
  Resources: <path d="M4 3 6 1h2v8H1V5l2-2zM8 4h3v7H5V9" fill="none" stroke="currentColor" />,
  Storage: <path d="M2 3h8l2 4v3H0V7z" />,
  Monitoring: <path d="M0 1h12v8H0zM2 3v4h8V3zM4 10h4v1H4z" fillRule="evenodd" />,
};
const Ico = ({ name, color = "currentColor" }) => (
  <svg width="11" height="11" viewBox="0 0 12 12" fill={color}>{sideIcons[name]}</svg>
);
const Gear = () => (
  <svg width="10" height="8" viewBox="0 0 10 8" fill="none" stroke="#777"><ellipse cx="4.500" cy="4" rx="2.800" ry="2.500" /><path d="M0 6h6M7 3l3-1.500" /></svg>
);
const LinkGlyph = () => (
  <svg width="6" height="6" viewBox="0 0 6 6" fill="none" stroke="#888"><path d="M1 1h2v2H1zM3 3h2v2H3z" /></svg>
);

const Card = ({ name, ago, box, image, ports, rev, auto }) => (
  <Tile>
    <TileHead><Gear /><ShotLink href="#" $s={8}>{name}</ShotLink><LinkGlyph /></TileHead>
    <Badge>{rev}</Badge>
    <Deployment>Deployment Config <ShotLink href="#">{name}</ShotLink> <small>– {ago} ago</small></Deployment>
    <TileBody>
      <ContainerInfo>
        <h4>CONTAINER: {box}</h4>
        <ul>
          <li><svg width="7" height="7" viewBox="0 0 7 7" fill="#777"><path d="M0 2l3.500-2L7 2v3L3.500 7 0 5z" /></svg><span><b>Image:</b> {image}</span></li>
          <li><svg width="7" height="7" viewBox="0 0 7 7" fill="none" stroke="#777"><path d="M0 4h2l1-2 1 3 1-2h2" /></svg><span><b>Ports:</b> {ports}</span></li>
        </ul>
      </ContainerInfo>
      <PodArea>
        <PodRow>
          <Donut><strong>1</strong><span>pod</span></Donut>
          {!auto && (
            <Scaler>
              <button aria-label="Scale up"><Chevron size={11} dir="up" w={2} /></button>
              <button aria-label="Scale down"><Chevron size={11} w={2} /></button>
            </Scaler>
          )}
        </PodRow>
        {auto && <span>{auto}</span>}
      </PodArea>
    </TileBody>
  </Tile>
);
const HealthAlert = ({ name }) => (
  <Alert>
    <AlertIcon><svg width="11" height="11" viewBox="0 0 11 11" fill="none" stroke="currentColor" strokeWidth="1.300"><circle cx="5.500" cy="5.500" r="4.700" /><path d="M5.500 2.500v1.300M5.500 4.600v3.800" /></svg></AlertIcon>
    <p>{name} has containers without health checks, which ensure your application is running correctly.&nbsp; <ShotLink href="#">Add health checks</ShotLink></p>
    <svg width="7" height="7" viewBox="0 0 7 7"><path d="m.5.5 6 6m0-6-6 6" stroke="#555" strokeWidth="1.300" /></svg>
  </Alert>
);
const Head = ({ title, url, plain }) => (
  <PanelHead>
    <Chevron size={7} w={1.3} />
    <h3>{title}</h3>
    {!plain && <svg width="5" height="5" viewBox="0 0 5 5" fill="none" stroke="#888"><path d="M4 3v1.500H.5V1H2M2 3l2.500-2.500" strokeWidth=".8" /></svg>}
    <ShotLink href="#" $s={plain ? 6 : 8}>{url}</ShotLink>
  </PanelHead>
);

const Overview = () => (
  <Shot>
    <ShotHead>
      <ShotHome><Ico name="home" />Projects</ShotHome>
      <ShotPicker><div><small>Project</small><strong>FAT - Digital Card System</strong></div><Chevron size={7} /></ShotPicker>
      <ShotAdd>Add to project</ShotAdd>
      <ShotTools>
        <span><HelpIcon size={9} /><Chevron size={5} /></span>
        <span><UserIcon size={8} />osadmin<Chevron size={5} /></span>
      </ShotTools>
    </ShotHead>
    <ShotBody>
      <SideNav>
        <SideList>
          {["Overview", "Applications", "Builds", "Resources", "Storage", "Monitoring"].map((n, i) => (
            <SideItem key={n} href="#" $on={i === 0}>
              <Ico name={n} color={i === 0 ? "#00a8e1" : undefined} />
              <span>{n}</span>
              {i > 0 && i < 4 && <Chevron size={6} dir="right" w={1.2} />}
            </SideItem>
          ))}
        </SideList>
      </SideNav>
      <Content>
        <Panel>
          <Head title="EGCP DCARD" url="http://dcsapi-t.dev.os/dcard" />
          <Tiles>
            <Card name="egcp-dcard" ago="3 hours" box="EGCP-DCARD" image="registry.mbu.local/egcp-dcard" ports="8080/TCP" rev="#14" auto="Autoscaled: min: 1, max: 4" />
            <Card name="database-dcard" ago="5 days" box="POSTGRESQL" image="centos/postgresql-95-centos7" ports="5432/TCP" rev="#1" />
          </Tiles>
        </Panel>
        <Panel>
          <Head title="EGCP DSIP" url="Create Route" plain />
          <HealthAlert name="egcp-dsip" />
          <Tiles>
            <Card name="egcp-dsip" ago="4 hours" box="EGCP-DSIP" image="registry.mbu.local/egcp-dsip" ports="6789/TCP , 8080/TCP" rev="#2" />
            <Card name="database-dsip" ago="4 hours" box="POSTGRESQL" image="centos/postgresql-95-centos7" ports="5432/TCP" rev="#1" />
          </Tiles>
        </Panel>
        <Panel>
          <Head title="EGCP FCARD" url="http://dcsapi-t.dev.os/fcard" />
          <HealthAlert name="egcp-fcard" />
          <Tiles>
            <Tile><TileHead><Gear /><ShotLink href="#" $s={8}>egcp-fcard</ShotLink><LinkGlyph /></TileHead></Tile>
            <Tile $blank />
          </Tiles>
        </Panel>
      </Content>
      <ShotScroll />
    </ShotBody>
  </Shot>
);

export default function App() {
  return (
    <>
      <GlobalStyle />
      <Desktop>
        <LeftScreen>
          <Browser />
          <Taskbar />
        </LeftScreen>
        <RightScreen>
          <Paint />
        </RightScreen>
      </Desktop>
    </>
  );
}
